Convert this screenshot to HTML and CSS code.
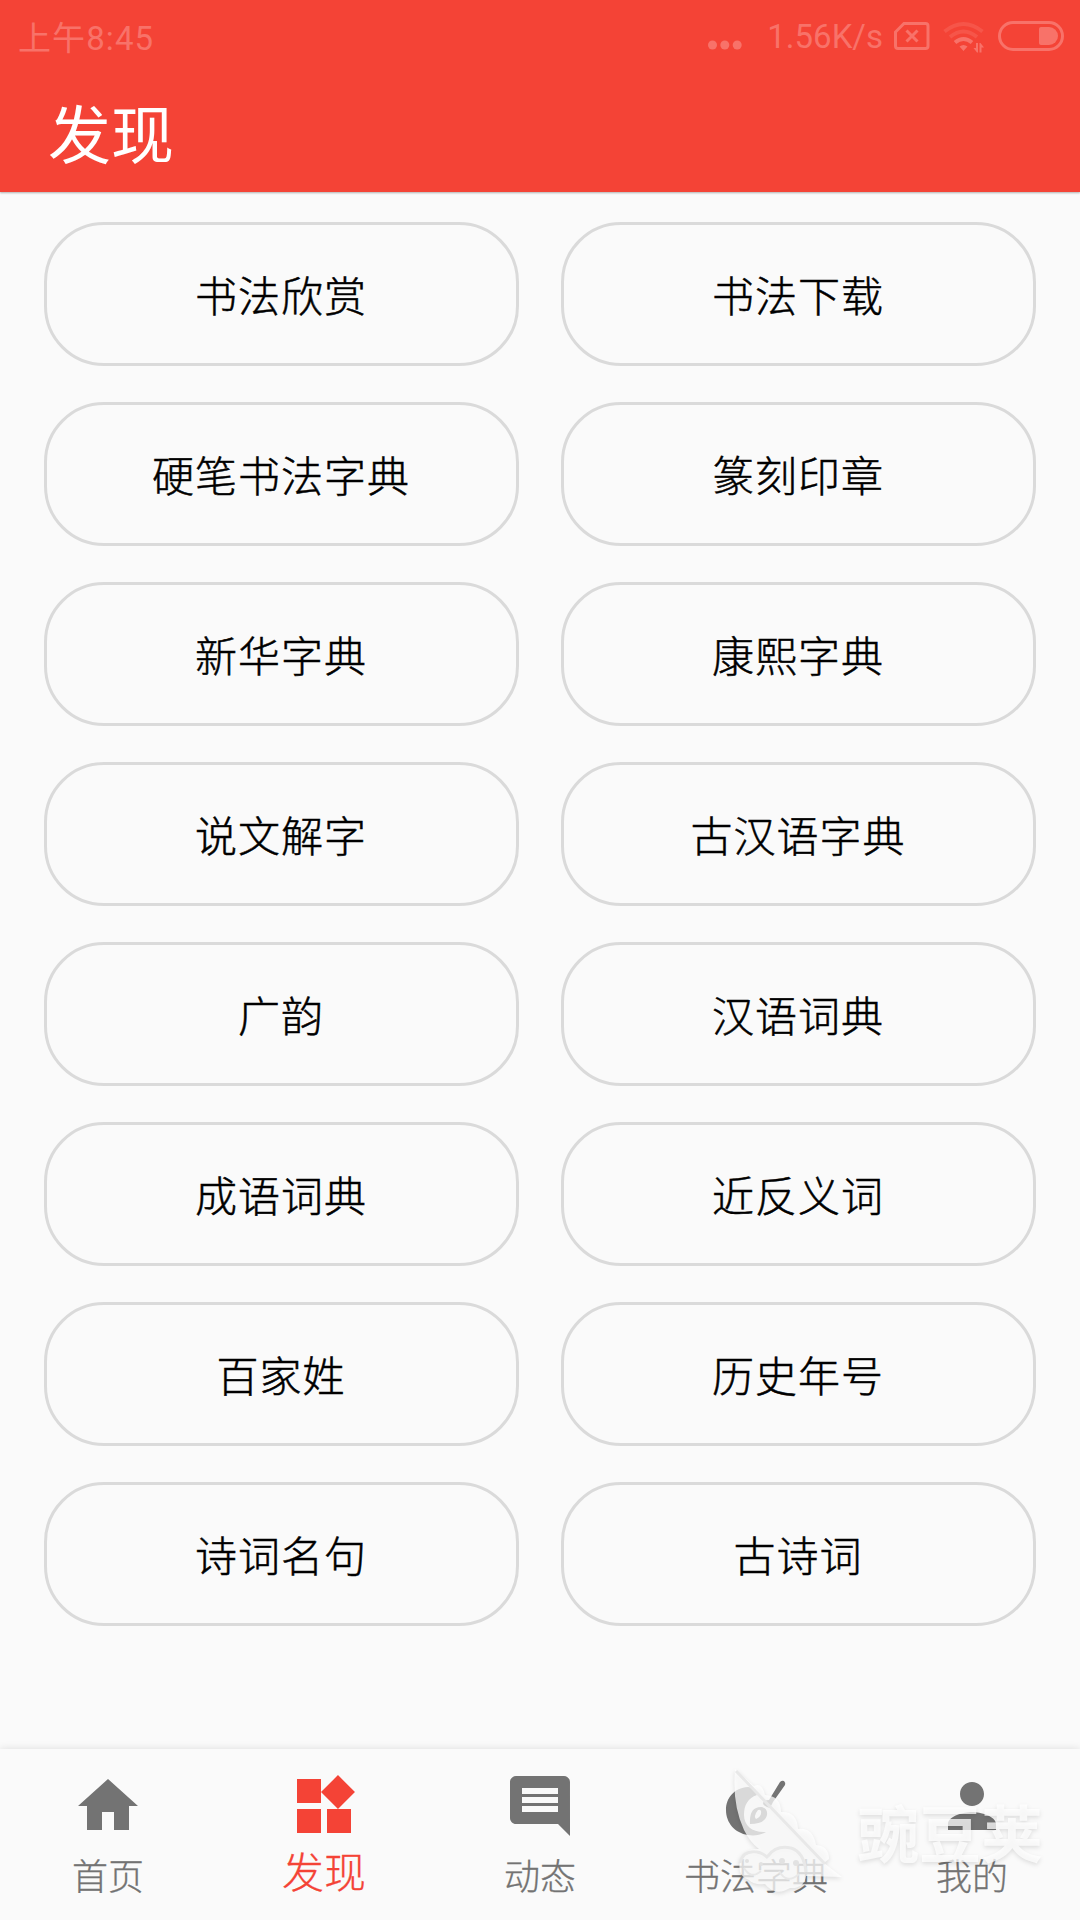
FILE: index.html
```html
<!DOCTYPE html>
<html lang="zh-CN">
<head>
  <meta charset="UTF-8" />
  <meta name="viewport" content="width=device-width, initial-scale=1.0" />
  <title>发现</title>
  <link rel="stylesheet" href="styles.css">
</head>
<body>
<header class="header">
  <div class="status-bar">
    <span class="time">上午8:45</span>
    <div class="status-icons">
      <svg class="dots" width="34" height="10" viewBox="0 0 34 10"><circle cx="4.5" cy="5" r="4.5"/><circle cx="16.8" cy="5" r="4.5"/><circle cx="29.2" cy="5" r="4.5"/></svg>
      <span class="speed">1.56K/s</span>
      <svg class="sim" width="36" height="28" viewBox="0 0 36 28"><path d="M10 1.500h21.500q2.500 0 2.500 2.500v20q0 2.500-2.500 2.500H4q-2.500 0-2.500-2.500V10zM12.500 8.500l11 11M23.500 8.500l-11 11"/></svg>
      <svg class="wifi" width="41" height="32" viewBox="0 0 41 32">
        <path class="faint" d="M1.500 10.500Q20.500-4.500 39.500 10.500M7 16Q20.500 5 34 16"/>
        <path d="M12 21.500Q20.500 14.500 29 21.500"/>
        <path class="solid" d="M16.500 25.500q4-3 8 0l-4 4.500zM33 22h2v9.500h-1l-3.500-4.500H33zM36.500 31.500V22h1l3.500 4.500h-2.500v5z"/>
      </svg>
      <svg class="battery" width="67" height="30" viewBox="0 0 67 30"><rect x="1.500" y="1.500" width="63" height="27" rx="13.500"/><path class="solid" d="M43 6h8a9 9 0 0 1 0 18h-8q-2 0-2-2V8q0-2 2-2z"/></svg>
    </div>
  </div>
  <h1 class="title">发现</h1>
</header>

<main class="grid">
  <button class="card">书法欣赏</button>
  <button class="card">书法下载</button>
  <button class="card">硬笔书法字典</button>
  <button class="card">篆刻印章</button>
  <button class="card">新华字典</button>
  <button class="card">康熙字典</button>
  <button class="card">说文解字</button>
  <button class="card">古汉语字典</button>
  <button class="card">广韵</button>
  <button class="card">汉语词典</button>
  <button class="card">成语词典</button>
  <button class="card">近反义词</button>
  <button class="card">百家姓</button>
  <button class="card">历史年号</button>
  <button class="card">诗词名句</button>
  <button class="card">古诗词</button>
</main>

<nav class="tabs">
  <a class="tab">
    <svg class="tab-icon" viewBox="0 0 24 24"><path d="M10 20v-6h4v6h5v-8h3L12 3 2 12h3v8z"/></svg>
    <span>首页</span>
  </a>
  <a class="tab active">
    <svg class="tab-icon" viewBox="0 0 24 24"><path d="M13 13v8h8v-8h-8zM3 21h8v-8H3v8zM3 3v8h8V3H3zm13.660-1.310L11 7.340 16.660 13l5.660-5.660-5.660-5.650z"/></svg>
    <span>发现</span>
  </a>
  <a class="tab">
    <svg class="tab-icon" viewBox="0 0 24 24"><path d="M21.990 4c0-1.100-.89-2-1.990-2H4c-1.100 0-2 .9-2 2v12c0 1.100.9 2 2 2h14l4 4-.01-18zM18 14H6v-2h12v2zm0-3H6V9h12v2zm0-3H6V6h12v2z"/></svg>
    <span>动态</span>
  </a>
  <a class="tab">
    <!-- ink stone, drop and brush -->
    <svg class="tab-icon" viewBox="0 0 72 72">
      <path d="M28 17C14 18 6 28 6 40c0 13 9 23 22 25 7 1 13 0 18-3-13 1-22-6-22-17 0-10 4-17 13-20-2-5-5-8-9-8z"/>
      <path fill-rule="evenodd" d="M30 54q-1-17 11-17 7 1 6 8-2 9-17 9zM38 40q-5 6-2 9 6-3 5-8-1-2-3-1z"/>
      <path d="M60 12q2-2 4-1 2 2 1 4L53 32l-3 6q-7-2-7-5 1-3 6-3z"/>
    </svg>
    <span>书法字典</span>
  </a>
  <a class="tab">
    <svg class="tab-icon" viewBox="0 0 24 24"><path d="M12 12c2.210 0 4-1.790 4-4s-1.790-4-4-4-4 1.790-4 4 1.790 4 4 4zm0 2c-2.670 0-8 1.340-8 4v2h16v-2c0-2.660-5.330-4-8-4z"/></svg>
    <span>我的</span>
  </a>
</nav>

<div class="watermark">
  <svg class="pod" width="135" height="140" viewBox="0 0 135 140">
    <path class="leaf" d="M20 9L39 26Q47 22 50 35Q66 36 66 52Q82 51 83 69Q98 67 101 85Q114 86 114 99L109 103L127 117L91 116Q89 129 75 128Q60 137 50 124Q38 125 34 120Q22 116 25 102Q27 89 44 89Q35 82 29 70Q17 44 20 9z"/>
    <path class="seam" d="M21 11L110 104"/>
    <path class="rim" d="M25 103Q28 90 42 92Q48 93 53 98M53 96Q61 85 76 88Q89 92 91 112"/>
    <circle class="eye" cx="32" cy="101" r="2"/>
    <circle class="eye" cx="46" cy="104" r="2"/>
    <circle class="eye" cx="67" cy="101" r="3"/>
    <circle class="eye" cx="81" cy="103" r="3"/>
    <path class="smile" d="M29 108q7 12 17 3M64 111q8 14 20 3"/>
  </svg>
  <span class="brand">豌豆荚</span>
</div>
</body>
</html>
```

FILE: styles.css
```css
* {
  box-sizing: border-box;
}

body {
  margin: 0;
  height: 1920px;
  display: flex;
  flex-direction: column;
  position: relative;
  overflow: hidden;
  background: #fafafa;
  font-family: "Noto Sans CJK SC", sans-serif;
  font-weight: 300;
}

.header {
  height: 192px;
  background: #f44336;
  color: #fff;
  box-shadow: 0 1px 2px rgba(0, 0, 0, 0.3);
}

.status-bar {
  height: 72px;
  padding: 0 15px 0 18px;
  display: flex;
  justify-content: space-between;
  align-items: center;
  color: #f87269;
  font-size: 34px;
  font-weight: 400;
}

.time {
  font-family: Roboto, "Noto Sans CJK SC", sans-serif;
  font-size: 33px;
  letter-spacing: 1.1px;
}

.status-icons {
  display: flex;
  align-items: center;
}

.status-icons svg {
  fill: none;
  stroke: #f87269;
  stroke-width: 3;
}

.status-icons .solid,
.status-icons .dots {
  fill: #f87269;
  stroke: none;
}

.status-icons .faint {
  stroke: #f65549;
}

.status-icons .wifi {
  stroke-width: 4;
  margin: 2px 14px 0 13px;
}

.status-icons .sim {
  margin-top: -1px;
}

.dots {
  margin: 18px 25px 0 0;
}

.speed {
  font-family: Roboto, sans-serif;
  font-size: 33px;
  margin-right: 11px;
}

.title {
  margin: 0;
  padding-left: 48px;
  height: 120px;
  line-height: 118px;
  font-size: 63px;
  font-weight: 400;
}

.grid {
  flex: 1;
  display: grid;
  grid-template-columns: 475px 475px;
  grid-auto-rows: 144px;
  gap: 36px 42px;
  align-content: start;
  padding: 30px 44px;
}

.card {
  padding: 0 1px 2px 0;
  border: 3px solid #dadada;
  border-radius: 60px;
  background: transparent;
  color: #000;
  font: inherit;
  font-size: 42px;
  letter-spacing: 1px;
  -webkit-text-stroke: 0.5px;
}

.tabs {
  height: 171px;
  display: grid;
  grid-template-columns: repeat(5, 1fr);
  background: #fafafa;
  box-shadow: 0 0 8px rgba(0, 0, 0, 0.12);
}

.tab {
  display: flex;
  flex-direction: column;
  align-items: center;
  padding-top: 21px;
  color: #737373;
  font-size: 36px;
  line-height: 65px;
  -webkit-text-stroke: 0.3px;
}

.tab.active {
  color: #f44336;
  font-size: 42px;
  line-height: 56px;
}

.tab-icon {
  width: 72px;
  height: 72px;
  fill: currentColor;
}

/* translucent store mark over the tab bar */
.watermark {
  position: absolute;
  left: 715px;
  top: 1760px;
  display: flex;
  filter: drop-shadow(0 2px 2px rgba(0, 0, 0, 0.15));
}

.leaf {
  fill: rgba(255, 255, 255, 0.75);
}

.seam,
.rim,
.smile {
  fill: none;
  stroke: #e8e8e8;
  stroke-width: 3;
}

.smile {
  stroke-width: 2;
}

.eye {
  fill: #e2e2e2;
}

.brand {
  margin: 26px 0 0 7px;
  font-size: 62px;
  line-height: 90px;
  font-weight: 700;
  color: rgba(255, 255, 255, 0.75);
}
```
